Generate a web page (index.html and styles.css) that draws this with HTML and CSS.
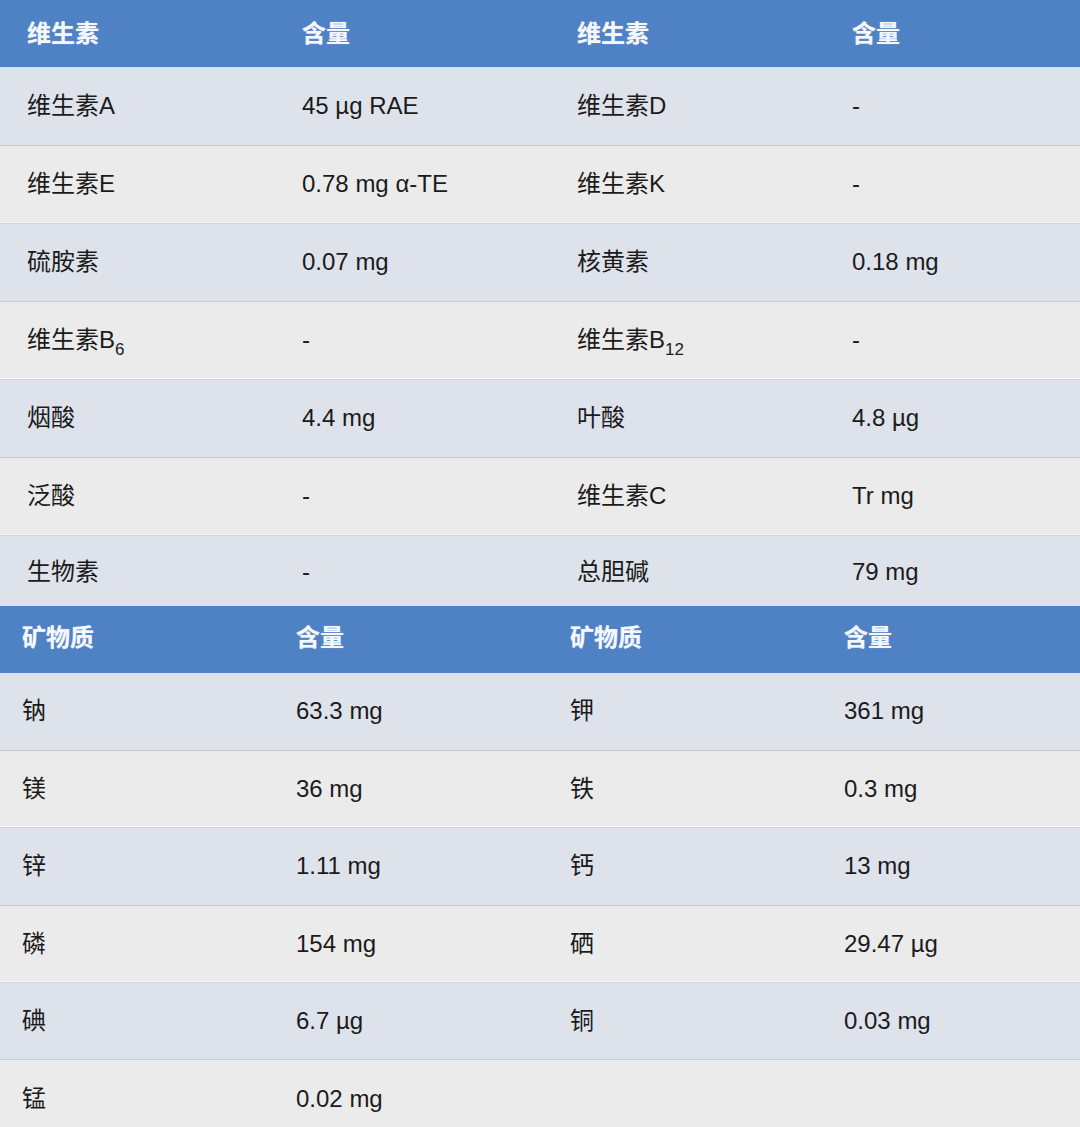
FILE: index.html
```html
<!DOCTYPE html>
<html lang="zh-CN">
<head>
<meta charset="utf-8">
<title>营养成分</title>
<link rel="stylesheet" href="styles.css">
</head>
<body>
<div class="page">
  <table class="nt vit">
    <colgroup><col><col><col><col></colgroup>
    <thead>
      <tr><th>维生素</th><th>含量</th><th>维生素</th><th>含量</th></tr>
    </thead>
    <tbody>
      <tr><td>维生素A</td><td>45 µg RAE</td><td>维生素D</td><td>-</td></tr>
      <tr><td>维生素E</td><td>0.78 mg α-TE</td><td>维生素K</td><td>-</td></tr>
      <tr><td>硫胺素</td><td>0.07 mg</td><td>核黄素</td><td>0.18 mg</td></tr>
      <tr><td>维生素B<sub>6</sub></td><td>-</td><td>维生素B<sub>12</sub></td><td>-</td></tr>
      <tr><td>烟酸</td><td>4.4 mg</td><td>叶酸</td><td>4.8 µg</td></tr>
      <tr><td>泛酸</td><td>-</td><td>维生素C</td><td>Tr mg</td></tr>
      <tr class="last"><td>生物素</td><td>-</td><td>总胆碱</td><td>79 mg</td></tr>
    </tbody>
  </table>
  <table class="nt min">
    <colgroup><col><col><col><col></colgroup>
    <thead>
      <tr><th>矿物质</th><th>含量</th><th>矿物质</th><th>含量</th></tr>
    </thead>
    <tbody>
      <tr><td>钠</td><td>63.3 mg</td><td>钾</td><td>361 mg</td></tr>
      <tr><td>镁</td><td>36 mg</td><td>铁</td><td>0.3 mg</td></tr>
      <tr><td>锌</td><td>1.11 mg</td><td>钙</td><td>13 mg</td></tr>
      <tr><td>磷</td><td>154 mg</td><td>硒</td><td>29.47 µg</td></tr>
      <tr><td>碘</td><td>6.7 µg</td><td>铜</td><td>0.03 mg</td></tr>
      <tr><td>锰</td><td>0.02 mg</td><td></td><td></td></tr>
    </tbody>
  </table>
</div>
</body>
</html>
```

FILE: styles.css
```css
html, body {
  margin: 0;
  padding: 0;
  background: #ebebeb;
}
body {
  width: 1080px;
  height: 1127px;
  overflow: hidden;
  font-family: "Liberation Sans", "Noto Sans CJK SC", sans-serif;
  color: #1b1b1b;
}
.page {
  width: 1080px;
  overflow: hidden;
}
.nt {
  border-collapse: collapse;
  table-layout: fixed;
  border-spacing: 0;
}
.nt th,
.nt td {
  text-align: left;
  font-size: 24px;
  line-height: 28px;
  padding: 0;
  white-space: nowrap;
  vertical-align: middle;
}
.nt th {
  background: #4f81c5;
  color: #f4f7fb;
  font-weight: bold;
  text-shadow: 0 0 1px rgba(255, 255, 255, 0.6);
}
.nt tbody tr:nth-child(odd) td {
  background: #dee2eb;
  border-bottom: 1px solid #c8cacf;
}
.nt tbody tr:nth-child(even) td {
  background: #ebebeb;
  border-bottom: 1px solid #d0d3d9;
  box-shadow: inset 0 -1px 0 #f6f6f7;
}
.nt sub {
  font-size: 17px;
  line-height: 0;
  vertical-align: -7px;
}

/* vitamin table */
.vit {
  width: 1100px;
}
.vit col {
  width: 275px;
}
.vit th,
.vit td {
  padding-left: 27px;
}
.vit thead tr {
  height: 67px;
}
.vit tbody tr {
  height: 78px;
}
.vit tbody tr.last {
  height: 71px;
}
.vit tbody tr.last td {
  border-bottom: none;
  padding-top: 3px;
}

/* mineral table */
.min {
  width: 1096px;
}
.min col {
  width: 274px;
}
.min th,
.min td {
  padding-left: 22px;
}
.min thead tr {
  height: 67px;
}
.min thead th {
  padding-bottom: 3px;
}
.min tbody tr {
  height: 77.4px;
}
```
